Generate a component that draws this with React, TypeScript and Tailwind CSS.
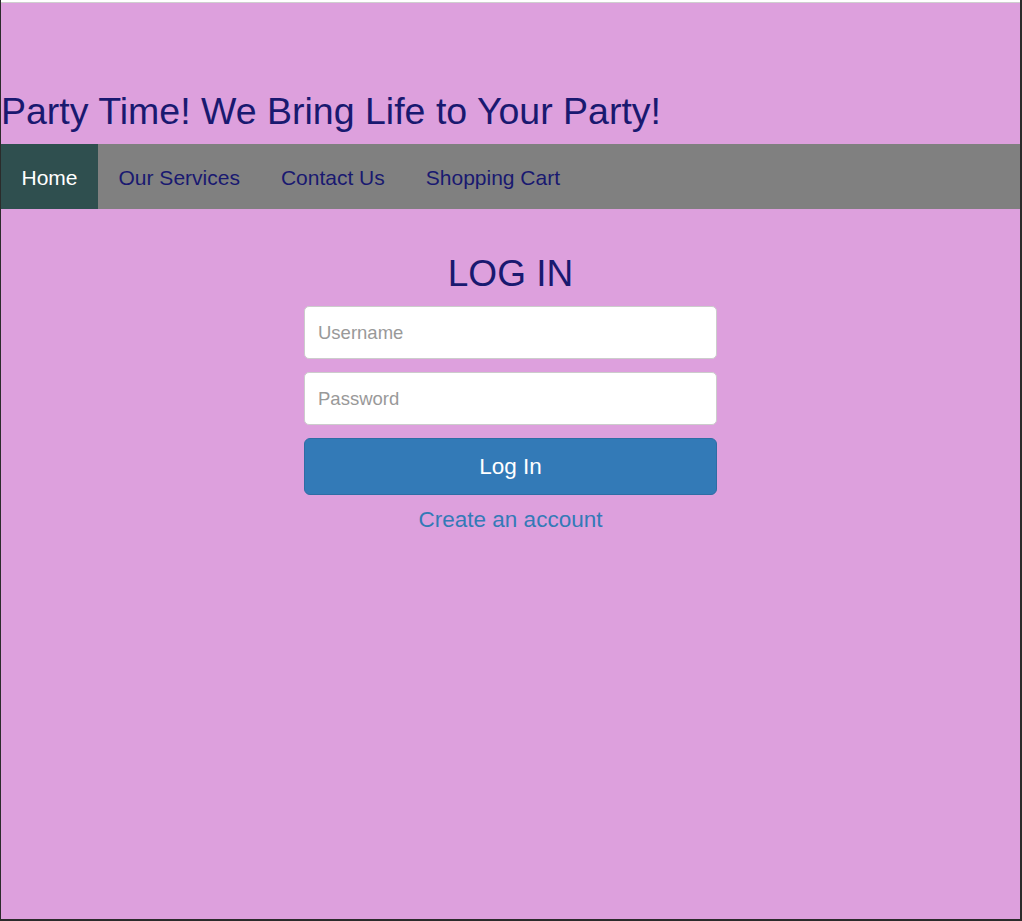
export default function App() {
  const links = ["Home", "Our Services", "Contact Us", "Shopping Cart"];

  return (
    <div
      className="h-[921px] w-[1022px] border-l border-r-2 border-b-2 border-[#2b2b2b] bg-[#dda0dd] flex flex-col"
      style={{ fontFamily: '"Liberation Sans", Arial, sans-serif' }}
    >
      <div className="h-[2px] bg-white" />
      <div className="h-px bg-[#cfcfcf]" />

      <h1 className="mt-[90px] text-[37.5px] leading-[37px] text-[#191970]">
        Party Time! We Bring Life to Your Party!
      </h1>

      <nav className="mt-[14px] h-[65px] bg-[#808080] flex">
        {links.map((label, i) => (
          <a
            key={label}
            href="#"
            className={
              i === 0
                ? "px-[20.5px] pt-[20.5px] pb-[19.5px] text-[21px] leading-[25px] bg-[#2f4f4f] text-white"
                : "px-[20.5px] pt-[20.5px] pb-[19.5px] text-[21px] leading-[25px] text-[#191970]"
            }
          >
            {label}
          </a>
        ))}
      </nav>

      <div className="w-[413px] mx-auto mt-[46px] flex flex-col">
        <h2 className="text-center text-[37px] leading-[37px] text-[#191970]">
          LOG IN
        </h2>
        <input
          type="text"
          placeholder="Username"
          className="mt-[14px] h-[53px] w-full rounded-[5px] border border-[#cccccc] bg-white px-[13px] text-[18.5px] placeholder:text-[#999999] outline-none"
        />
        <input
          type="password"
          placeholder="Password"
          className="mt-[13px] h-[53px] w-full rounded-[5px] border border-[#cccccc] bg-white px-[13px] text-[18.5px] placeholder:text-[#999999] outline-none"
        />
        <button className="mt-[13px] h-[57px] w-full rounded-[6px] border border-[#2e6da4] bg-[#337ab7] text-[22.5px] text-white">
          Log In
        </button>
        <a
          href="#"
          className="mt-[14px] text-center text-[22.5px] leading-[22px] text-[#337ab7]"
        >
          Create an account
        </a>
      </div>
    </div>
  );
}
